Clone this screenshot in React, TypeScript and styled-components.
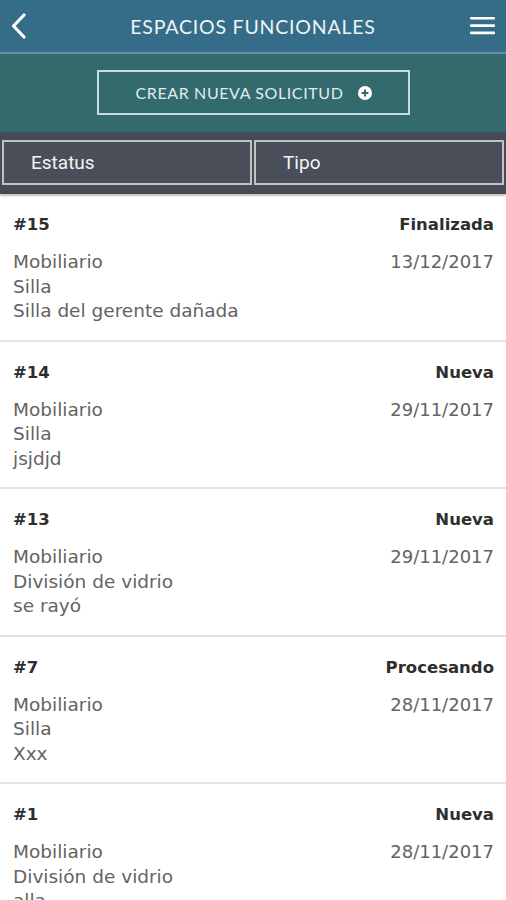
import React from "react";
import styled, { createGlobalStyle } from "styled-components";

const Global = createGlobalStyle`
  html, body { margin: 0; padding: 0; background: #ffffff; }
  body { font-family: "DejaVu Sans", "Lato", sans-serif; }
  * { box-sizing: border-box; }
`;

const Page = styled.div`
  width: 506px;
  height: 900px;
  overflow: hidden;
  display: flex;
  flex-direction: column;
  background: #ffffff;
`;

const TopBar = styled.header`
  height: 54px;
  flex: none;
  background: #356d88;
  border-bottom: 2px solid #6391a0;
  display: grid;
  grid-template-columns: 48px 1fr 48px;
  align-items: center;
  color: #ffffff;
`;

const IconButton = styled.div<{ $end?: boolean }>`
  display: flex;
  align-items: center;
  justify-content: ${(p) => (p.$end ? "flex-end" : "flex-start")};
  padding: ${(p) => (p.$end ? "0 11px 0 0" : "0 0 0 10px")};
  height: 100%;
`;

const Title = styled.h1`
  margin: 0;
  text-align: center;
  font-family: "Lato", sans-serif;
  font-weight: 400;
  font-size: 19.5px;
  letter-spacing: 0.8px;
  color: #eef4f6;
  padding-top: 1px;
`;

const ActionBand = styled.div`
  height: 78px;
  flex: none;
  background: #336a6e;
  display: flex;
  align-items: center;
  justify-content: center;
`;

const CreateButton = styled.button`
  width: 313px;
  height: 45px;
  background: transparent;
  border: 2px solid #c3dde0;
  color: #e0ecee;
  font-family: "Lato", sans-serif;
  font-size: 16px;
  font-weight: 400;
  letter-spacing: 0.6px;
  display: flex;
  align-items: center;
  justify-content: center;
  gap: 15px;
  padding: 0 0 0 2px;
  margin-top: -1px;
`;

const FilterBar = styled.div`
  height: 62px;
  flex: none;
  background: #464a54;
  display: grid;
  grid-template-columns: 1fr 1fr;
  gap: 2px;
  padding: 8px 2px 9px 2px;
  box-shadow: 0 2px 2px rgba(0, 0, 0, 0.25);
  position: relative;
  z-index: 1;
`;

const FilterBox = styled.div`
  border: 2px solid #c2c2c4;
  background: #4a4e58;
  display: flex;
  align-items: center;
  padding-left: 27px;
  font-family: "Roboto", sans-serif;
  font-size: 19px;
  color: #f4f4f4;
`;

const List = styled.div`
  display: flex;
  flex-direction: column;
`;

const Item = styled.div`
  height: 147.5px;
  flex: none;
  border-bottom: 2px solid #e3e3e3;
  padding: 19px 12px 0 13px;
  display: grid;
  grid-template-columns: 1fr auto;
  grid-template-rows: 37px auto;
  color: #555555;
`;

const Strong = styled.div<{ $right?: boolean }>`
  font-family: "DejaVu Sans", sans-serif;
  font-weight: 700;
  font-size: 16.5px;
  color: #2e2e2e;
  text-align: ${(p) => (p.$right ? "right" : "left")};
  line-height: 24px;
`;

const Lines = styled.div`
  font-family: "DejaVu Sans", sans-serif;
  font-weight: 400;
  font-size: 18.5px;
  line-height: 24.5px;
  color: #636363;
`;

const DateText = styled.div`
  font-family: "DejaVu Sans", sans-serif;
  font-size: 18px;
  line-height: 24.5px;
  color: #636363;
  text-align: right;
`;

type Req = { id: string; status: string; cat: string; kind: string; desc: string; date: string };

const data: Req[] = [
  { id: "#15", status: "Finalizada", cat: "Mobiliario", kind: "Silla", desc: "Silla del gerente dañada", date: "13/12/2017" },
  { id: "#14", status: "Nueva", cat: "Mobiliario", kind: "Silla", desc: "jsjdjd", date: "29/11/2017" },
  { id: "#13", status: "Nueva", cat: "Mobiliario", kind: "División de vidrio", desc: "se rayó", date: "29/11/2017" },
  { id: "#7", status: "Procesando", cat: "Mobiliario", kind: "Silla", desc: "Xxx", date: "28/11/2017" },
  { id: "#1", status: "Nueva", cat: "Mobiliario", kind: "División de vidrio", desc: "alla", date: "28/11/2017" },
];

const Back = () => (
  <svg width="18" height="26" viewBox="0 0 18 26" fill="none">
    <path d="M14 2 L3.5 13 L14 24" stroke="#ffffff" strokeWidth="3.2" strokeLinecap="round" strokeLinejoin="round" />
  </svg>
);

const Menu = () => (
  <svg width="25" height="20" viewBox="0 0 25 20" fill="none">
    <rect x="0" y="1" width="25" height="2.6" rx="1" fill="#ffffff" />
    <rect x="0" y="8.3" width="25" height="2.6" rx="1" fill="#ffffff" />
    <rect x="0" y="15.6" width="25" height="2.6" rx="1" fill="#ffffff" />
  </svg>
);

const PlusCircle = () => (
  <svg width="14" height="14" viewBox="0 0 14 14">
    <circle cx="7" cy="7" r="7" fill="#ffffff" />
    <path d="M7 3.6 V10.4 M3.6 7 H10.4" stroke="#336a6e" strokeWidth="2" />
  </svg>
);

export default function App() {
  return (
    <Page>
      <Global />
      <TopBar>
        <IconButton>
          <Back />
        </IconButton>
        <Title>ESPACIOS FUNCIONALES</Title>
        <IconButton $end>
          <Menu />
        </IconButton>
      </TopBar>
      <ActionBand>
        <CreateButton>
          CREAR NUEVA SOLICITUD
          <PlusCircle />
        </CreateButton>
      </ActionBand>
      <FilterBar>
        <FilterBox>Estatus</FilterBox>
        <FilterBox>Tipo</FilterBox>
      </FilterBar>
      <List>
        {data.map((r) => (
          <Item key={r.id}>
            <Strong>{r.id}</Strong>
            <Strong $right>{r.status}</Strong>
            <Lines>
              {r.cat}
              <br />
              {r.kind}
              <br />
              {r.desc}
            </Lines>
            <DateText>{r.date}</DateText>
          </Item>
        ))}
      </List>
    </Page>
  );
}
